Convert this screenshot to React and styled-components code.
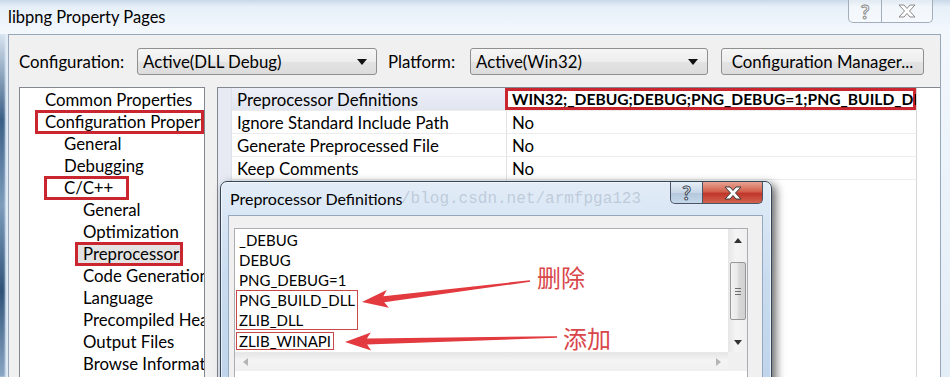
import React from 'react'
import styled, { createGlobalStyle } from 'styled-components'

const GlobalStyle = createGlobalStyle`
  html, body {
    margin: 0;
    padding: 0;
    overflow: hidden;
    background: #e6eff8;
  }
  body {
    font-family: Lato, "Liberation Sans", sans-serif;
    color: #000;
  }
`

const Screen = styled.div`
  position: relative;
  width: 950px;
  height: 377px;
  overflow: hidden;
  display: flex;
  flex-direction: column;
  background: linear-gradient(180deg, #c9d8e8 0px, #e7f0f9 7px, #f2f7fc 30px, #e3edf7 100%);
`

const TitleBar = styled.div`
  height: 34px;
  flex: none;
  display: flex;
  align-items: flex-start;
  padding-left: 8px;
`

const Title = styled.div`
  font-size: 16.5px;
  line-height: 34px;
  flex: 1;
`

const CaptionButtons = styled.div`
  display: flex;
  margin-right: 17px;
`

const CapButton = styled.div`
  width: ${p => p.$w}px;
  height: 23px;
  display: flex;
  align-items: center;
  justify-content: center;
  box-sizing: border-box;
  border: 1px solid #a3aebb;
  border-top: none;
  border-left-width: ${p => (p.$first ? 1 : 0)}px;
  border-radius: ${p => (p.$first ? '0 0 0 5px' : '0 0 5px 0')};
  background: rgba(255, 255, 255, 0.45);
  font-size: 19px;
  font-weight: 700;
  color: #fff;
  -webkit-text-stroke: 1px #8a8a8a;
`

const Frame = styled.div`
  flex: 1;
  display: flex;
  min-height: 0;
`

const EdgeLeft = styled.div`
  width: 8px;
  flex: none;
  background: linear-gradient(180deg, #d8e4f0 0%, #3a5f86 25%, #7d9cbc 50%, #2f5378 75%, #8aa6c4 100%);
  box-shadow: inset -3px 0 2px #e2ecf6;
`

const Client = styled.div`
  flex: 1;
  min-width: 0;
  display: flex;
  flex-direction: column;
  background: #f0f0f0;
  border: 1px solid #97a6b8;
  border-bottom: none;
  padding: 13px 0 0 10px;
  margin-right: 9px;
  font-size: 16.8px;
`

const ConfigRow = styled.div`
  height: 27px;
  flex: none;
  display: flex;
  align-items: center;
`

const FieldLabel = styled.div`
  width: ${p => p.$w}px;
  flex: none;
`

const Combo = styled.div`
  width: ${p => p.$w}px;
  height: 27px;
  flex: none;
  box-sizing: border-box;
  display: flex;
  align-items: center;
  justify-content: space-between;
  padding: 0 9px 0 5px;
  border: 1px solid #8e8f8f;
  border-radius: 3px;
  background: linear-gradient(180deg, #f6f6f6 0%, #ededed 50%, #e3e3e3 51%, #dcdcdc 100%);
  margin-right: ${p => p.$mr || 0}px;
`

const Caret = styled.span`
  width: 0;
  height: 0;
  border-left: 5px solid transparent;
  border-right: 5px solid transparent;
  border-top: 6px solid #111;
`

const PushButton = styled.div`
  width: 203px;
  height: 27px;
  flex: none;
  box-sizing: border-box;
  display: flex;
  align-items: center;
  justify-content: center;
  border: 1px solid #8e8f8f;
  border-radius: 3px;
  background: linear-gradient(180deg, #f6f6f6 0%, #ededed 50%, #e3e3e3 51%, #dcdcdc 100%);
  margin-left: 13px;
`

const Workspace = styled.div`
  flex: 1;
  min-height: 0;
  display: flex;
  gap: 12px;
  margin-top: 12px;
`

const Tree = styled.div`
  width: 186px;
  flex: none;
  box-sizing: border-box;
  border: 1px solid #828790;
  border-bottom: none;
  background: #fff;
  overflow: hidden;
  padding-top: 1px;
`

const TreeRow = styled.div`
  height: 22px;
  display: flex;
  align-items: center;
  padding-left: ${p => 25 + p.$level * 19}px;
  white-space: nowrap;
`

const TreeLabel = styled.span`
  display: inline-block;
  height: 18px;
  line-height: 18px;
  box-sizing: border-box;
  white-space: nowrap;
  ${p =>
    p.$box &&
    `
    margin-left: -${p.$box.pl}px;
    padding-left: ${p.$box.pl}px;
    padding-right: ${p.$box.pr || 0}px;
    outline: 3px solid #c9262f;
    background: ${p.$box.bg || 'transparent'};
  `}
  ${p =>
    p.$box &&
    p.$box.w &&
    `
    width: ${p.$box.w}px;
    overflow-x: clip;
  `}
`

const Grid = styled.div`
  flex: 1;
  min-width: 0;
  display: flex;
  flex-direction: column;
  border: 1px solid #828790;
  border-right: none;
  border-bottom: none;
  background: #fff;
`

const GridRow = styled.div`
  display: grid;
  grid-template-columns: 14px 275px 410px 1fr;
  height: ${p => (p.$fill ? 'auto' : '23px')};
  flex: ${p => (p.$fill ? 1 : 'none')};
`

const Indent = styled.div`
  background: #e7eaf3;
  border-right: 1px solid #dfe2ea;
`

const NameCell = styled.div`
  display: flex;
  align-items: center;
  padding-left: 5px;
  border-right: 1px solid #e2e2e2;
  border-bottom: ${p => (p.$fill ? 'none' : '1px solid #ececec')};
  background: ${p => (p.$sel ? 'linear-gradient(180deg, #eceff7, #e2e6f1)' : '#fff')};
  white-space: nowrap;
  overflow: hidden;
`

const ValueCell = styled.div`
  display: flex;
  align-items: center;
  border-right: 1px solid #d6d6d6;
  border-bottom: ${p => (p.$fill ? 'none' : '1px solid #ececec')};
  white-space: nowrap;
  overflow: hidden;
  font-weight: ${p => (p.$bold ? 700 : 400)};
  font-size: ${p => (p.$bold ? '15.6px' : 'inherit')};
  box-shadow: ${p => (p.$box ? 'inset 0 0 0 3px #c9262f' : 'none')};
  margin-left: ${p => (p.$box ? '-2px' : '0')};
  padding-left: ${p => (p.$box ? '7px' : '5px')};
`

const Dialog = styled.div`
  position: absolute;
  left: 220px;
  top: 181px;
  width: 552px;
  height: 240px;
  box-sizing: border-box;
  display: flex;
  flex-direction: column;
  padding: 0 8px 0 7px;
  border: 1px solid #34465a;
  border-radius: 7px 7px 0 0;
  background: linear-gradient(180deg, #e2ecf7 0%, #c9dcef 40%, #bcd2ea 100%);
  box-shadow: 4px 3px 10px rgba(0, 0, 0, 0.6), inset 0 0 0 1px rgba(255, 255, 255, 0.6);
`

const DialogTitleBar = styled.div`
  height: 33px;
  flex: none;
  display: flex;
  align-items: flex-start;
`

const DialogTitle = styled.div`
  flex: 1;
  font-size: 16px;
  line-height: 34px;
  padding-left: 2px;
`

const DlgButton = styled.div`
  width: ${p => p.$w}px;
  height: 22px;
  box-sizing: border-box;
  display: flex;
  align-items: center;
  justify-content: center;
  border: 1px solid #4a5668;
  border-top: none;
  border-left-width: ${p => (p.$red ? 0 : 1)}px;
  border-radius: ${p => (p.$red ? '0 0 5px 0' : '0 0 0 5px')};
  background: ${p =>
    p.$red
      ? 'linear-gradient(180deg, #e8a493 0%, #d2614c 45%, #c1362a 55%, #d1634f 100%)'
      : 'linear-gradient(180deg, #e6eef7 0%, #c8d6e6 50%, #b3c6db 51%, #c6d7ea 100%)'};
  font-size: 19px;
  font-weight: 700;
  color: #fff;
  -webkit-text-stroke: 1px #3c4a5c;
`

const DialogClient = styled.div`
  flex: 1;
  background: #f0f0f0;
  border: 1px solid #95a8c0;
  padding: 12px 14px 0 5px;
`

const ListBox = styled.div`
  display: grid;
  grid-template-columns: 1fr 19px;
  grid-template-rows: 123px 19px 20px;
  border: 1px solid #abadb3;
  background: #fff;
`

const Lines = styled.div`
  display: flex;
  flex-direction: column;
  align-items: flex-start;
  padding: 1px 0 0 4px;
  font-size: 15px;
  overflow: hidden;
`

const Line = styled.div`
  height: 20px;
  line-height: 20px;
  white-space: nowrap;
`

const Marked = styled.div`
  display: flex;
  flex-direction: column;
  margin-left: -3px;
  padding: 0 3px;
  box-shadow: inset 0 0 0 1px #c9484a;
  ${p => p.$tight && 'height: 18px; margin-top: 2px; line-height: 18px;'}
`

const VScroll = styled.div`
  display: flex;
  flex-direction: column;
  background: linear-gradient(90deg, #e6e6e6, #f4f4f4 40%, #f0f0f0);
`

const ScrollArrow = styled.div`
  height: ${p => p.$h || 17}px;
  width: ${p => p.$w || 19}px;
  flex: none;
  display: flex;
  align-items: center;
  justify-content: center;
`

const Track = styled.div`
  flex: 1;
  padding-top: 11px;
  display: flex;
  justify-content: center;
`

const Thumb = styled.div`
  width: 16px;
  height: 58px;
  box-sizing: border-box;
  border: 1px solid #979797;
  border-radius: 2px;
  background: linear-gradient(90deg, #f3f3f3 0%, #e8e8e8 45%, #d9d9d9 55%, #d0d0d0 100%);
  display: flex;
  flex-direction: column;
  align-items: center;
  justify-content: center;
  gap: 2px;
`

const Grip = styled.span`
  width: 6px;
  height: 1px;
  background: #6f6f6f;
`

const HScroll = styled.div`
  display: flex;
  align-items: center;
  justify-content: space-between;
  background: linear-gradient(180deg, #e6e6e6, #f4f4f4 40%, #f0f0f0);
  border-top: 1px solid #e8e8e8;
`

const Corner = styled.div`
  background: #f0f0f0;
`

const Watermark = styled.div`
  position: absolute;
  left: 401px;
  top: 190px;
  font-family: "Liberation Mono", monospace;
  font-size: 16px;
  color: rgba(150, 165, 182, 0.45);
  white-space: nowrap;
  pointer-events: none;
`

const Note = styled.div`
  position: absolute;
  left: ${p => p.$x}px;
  top: ${p => p.$y}px;
  font-family: "Noto Sans CJK SC", sans-serif;
  font-size: 24px;
  color: #d9474b;
  white-space: nowrap;
`

const Overlay = styled.svg`
  position: absolute;
  left: 0;
  top: 0;
  pointer-events: none;
`

const Tri = ({ dir, color = '#333' }) => {
  const pts = {
    up: '0,5 4,0 8,5',
    down: '0,0 8,0 4,5',
    left: '5,0 5,8 0,4',
    right: '0,0 5,4 0,8',
  }[dir]
  const vertical = dir === 'up' || dir === 'down'
  return (
    <svg width={vertical ? 8 : 5} height={vertical ? 5 : 8}>
      <polygon points={pts} fill={color} />
    </svg>
  )
}

const CloseGlyph = ({ stroke, fill }) => (
  <svg width="18" height="14" viewBox="0 0 18 14">
    <polygon
      points="1,1 6,1 9,4.5 12,1 17,1 11.5,7 17,13 12,13 9,9.5 6,13 1,13 6.5,7"
      fill={fill}
      stroke={stroke}
      strokeWidth="1"
      strokeLinejoin="round"
    />
  </svg>
)

const treeItems = [
  { label: 'Common Properties', level: 0 },
  { label: 'Configuration Properties', level: 0, box: { w: 163, pl: 7 } },
  { label: 'General', level: 1 },
  { label: 'Debugging', level: 1 },
  { label: 'C/C++', level: 1, box: { pl: 17, pr: 13 } },
  { label: 'General', level: 2 },
  { label: 'Optimization', level: 2 },
  { label: 'Preprocessor', level: 2, box: { pl: 5, pr: 1, bg: '#e3e3e3' } },
  { label: 'Code Generation', level: 2 },
  { label: 'Language', level: 2 },
  { label: 'Precompiled Headers', level: 2 },
  { label: 'Output Files', level: 2 },
  { label: 'Browse Information', level: 2 },
]

const props = [
  { name: 'Preprocessor Definitions', value: 'WIN32;_DEBUG;DEBUG;PNG_DEBUG=1;PNG_BUILD_DLL;ZLIB_DLL;ZLIB_WINAPI;%(PreprocessorDefinitions)', sel: true },
  { name: 'Ignore Standard Include Path', value: 'No' },
  { name: 'Generate Preprocessed File', value: 'No' },
  { name: 'Keep Comments', value: 'No' },
]

export default function App() {
  return (
    <>
      <GlobalStyle />
      <Screen>
        <TitleBar>
          <Title>libpng Property Pages</Title>
          <CaptionButtons>
            <CapButton $w={34} $first>?</CapButton>
            <CapButton $w={51}>
              <CloseGlyph stroke="#8a8a8a" fill="#fff" />
            </CapButton>
          </CaptionButtons>
        </TitleBar>

        <Frame>
          <EdgeLeft />
          <Client>
            <ConfigRow>
              <FieldLabel $w={118}>Configuration:</FieldLabel>
              <Combo $w={240} $mr={11}>
                Active(DLL Debug)
                <Caret />
              </Combo>
              <FieldLabel $w={82}>Platform:</FieldLabel>
              <Combo $w={238}>
                Active(Win32)
                <Caret />
              </Combo>
              <PushButton>Configuration Manager...</PushButton>
            </ConfigRow>

            <Workspace>
              <Tree>
                {treeItems.map((item, i) => (
                  <TreeRow key={i} $level={item.level}>
                    <TreeLabel $box={item.box}>{item.label}</TreeLabel>
                  </TreeRow>
                ))}
              </Tree>

              <Grid>
                {props.map((p, i) => (
                  <GridRow key={i}>
                    <Indent />
                    <NameCell $sel={p.sel}>{p.name}</NameCell>
                    <ValueCell $bold={p.sel} $box={p.sel}>{p.value}</ValueCell>
                    <div />
                  </GridRow>
                ))}
                <GridRow $fill>
                  <Indent />
                  <NameCell $fill />
                  <ValueCell $fill />
                  <div />
                </GridRow>
              </Grid>
            </Workspace>
          </Client>
        </Frame>

        <Dialog>
          <DialogTitleBar>
            <DialogTitle>Preprocessor Definitions</DialogTitle>
            <DlgButton $w={33}>?</DlgButton>
            <DlgButton $w={60} $red>
              <CloseGlyph stroke="#3c3c3c" fill="#fff" />
            </DlgButton>
          </DialogTitleBar>
          <DialogClient>
            <ListBox>
              <Lines>
                <Line>_DEBUG</Line>
                <Line>DEBUG</Line>
                <Line>PNG_DEBUG=1</Line>
                <Marked>
                  <Line>PNG_BUILD_DLL</Line>
                  <Line>ZLIB_DLL</Line>
                </Marked>
                <Marked $tight>ZLIB_WINAPI</Marked>
              </Lines>
              <VScroll>
                <ScrollArrow $h={22}>
                  <Tri dir="up" />
                </ScrollArrow>
                <Track>
                  <Thumb>
                    <Grip />
                    <Grip />
                    <Grip />
                  </Thumb>
                </Track>
                <ScrollArrow $h={20}>
                  <Tri dir="down" />
                </ScrollArrow>
              </VScroll>
              <HScroll>
                <ScrollArrow $w={20}>
                  <Tri dir="left" color="#b5b5b5" />
                </ScrollArrow>
                <ScrollArrow $w={20}>
                  <Tri dir="right" color="#b5b5b5" />
                </ScrollArrow>
              </HScroll>
              <Corner />
            </ListBox>
          </DialogClient>
        </Dialog>

        <Watermark>/blog.csdn.net/armfpga123</Watermark>

        <Overlay width="950" height="377">
          <polygon
            points="362,302 388.9,307.7 384.2,302.3 530.1,281.8 529.9,280.2 383.4,296.3 386.7,289.9"
            fill="#e23a3f"
          />
          <polygon
            points="345,342 371.2,350.4 367.1,344.5 557,337.8 557,336.2 366.9,338.5 370.8,332.4"
            fill="#e23a3f"
          />
        </Overlay>
        <Note $x={537} $y={259}>删除</Note>
        <Note $x={563} $y={320}>添加</Note>
      </Screen>
    </>
  )
}
